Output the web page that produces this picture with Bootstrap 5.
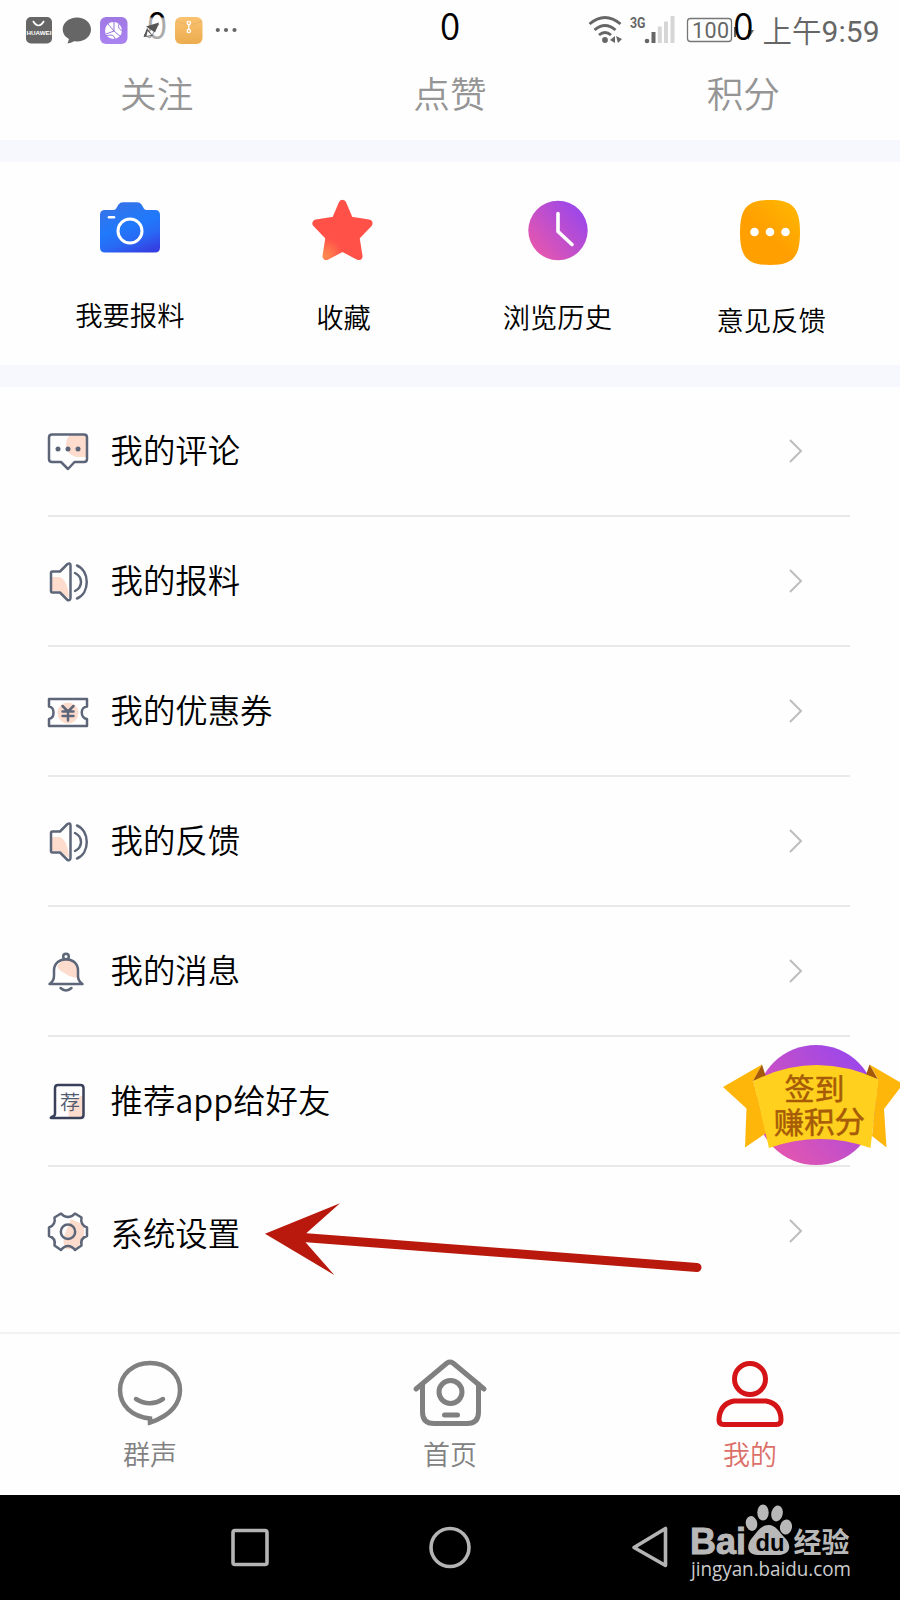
<!DOCTYPE html>
<html lang="zh-CN">
<head>
<meta charset="utf-8">
<meta name="viewport" content="width=device-width, initial-scale=1">
<title>我的</title>
<link rel="stylesheet" href="https://cdn.jsdelivr.net/npm/bootstrap@5.3.0/dist/css/bootstrap.min.css">
<style>
  body { font-family: "Noto Sans CJK SC", sans-serif; font-weight: 350; color: #000; background: #fefefe; }
  svg { display: block; overflow: visible; flex: none; }
  .screen { width: 900px; height: 1600px; }
  .stats { height: 140px; padding: 0 10px; font-size: 36.7px; }
  .stat-num { height: 54px; line-height: 49px; color: #000; }
  .stat-label { line-height: 54px; margin-top: 11px; color: #959595; }
  .statusbar { height: 60px; color: #666; font-weight: 400; }
  .gap-band { height: 22px; background: #f7f8fd; }
  .quick { height: 203px; padding: 28px 22px 0 23px; font-size: 27.3px; line-height: 40px; }
  .quick svg { margin-bottom: 34px; }
  .menu { height: 945px; padding: 0 50px 0 47.5px; font-size: 32.4px; }
  .menu-row { height: 130px; border-bottom: 2px solid #e9e9e9; padding-right: 47px; }
  .menu-row:last-child { border-bottom-color: transparent; }
  .menu-row span { margin-left: 23px; line-height: 48px; padding-bottom: 4px; }
  .menu-row:last-child span { padding-bottom: 0; padding-top: 1px; }
  .line-icon { fill: none; stroke: #5d6678; stroke-width: 2.5; stroke-linejoin: round; stroke-linecap: round; }
  .line-icon .blush { fill: #fddccd; stroke: none; }
  .chevron { fill: none; stroke: #bdbdbd; stroke-width: 2; }
  .tabs { height: 163px; border-top: 2px solid #f2f2f2; font-size: 27px; line-height: 40px; color: #818181; }
  .tabs svg { margin: 20px 0 6px; fill: none; stroke: #808080; stroke-width: 5; stroke-linecap: round; stroke-linejoin: round; }
  .tabs .current { color: #dc7068; }
  .tabs .current svg { stroke: #d51417; }
  .sysbar { height: 105px; background: #000; font-weight: 400; }
  .sys-key { fill: none; stroke: #b4b4b4; stroke-width: 3.6; stroke-linejoin: round; }
  .overlay { pointer-events: none; }
  .checkin { left: 720px; top: 1040px; }
  .pointer { left: 260px; top: 1195px; }
</style>
</head>
<body>
<div class="screen position-relative overflow-hidden d-flex flex-column">

  <div class="statusbar position-absolute top-0 start-0 w-100">
    <svg width="900" height="60" viewBox="0 0 900 60">
      <rect x="26" y="17" width="26" height="26.500" rx="5" fill="#666"/>
      <path d="M33 21q5.500 9 11 0" fill="none" stroke="#fff" stroke-width="1.700"/>
      <text x="26.500" y="35" font-family="Liberation Sans" font-weight="700" font-size="5.600" textLength="25" lengthAdjust="spacingAndGlyphs" fill="#fff">HUAWEI</text>
      <path d="M77 17.500c8 0 14 5.200 14 12s-6 12-14 12l-3-.3q-3 2-6.500 2.300l1.500-4.500q-6.300-3.200-6.300-9.500c0-6.800 6.300-12 14.300-12z" fill="#666"/>
      <defs>
        <linearGradient id="orangeApp" x2="0" y2="1"><stop stop-color="#fac270"/><stop offset="1" stop-color="#edac4f"/></linearGradient>
        <linearGradient id="violetApp" x2="0" y2="1"><stop stop-color="#9f78e4"/><stop offset="1" stop-color="#a983f0"/></linearGradient>
        <linearGradient id="zero" gradientUnits="userSpaceOnUse" x1="0" y1="12" x2="0" y2="40"><stop offset=".16" stop-color="#000"/><stop offset=".24" stop-color="#aaa"/></linearGradient>
      </defs>
      <rect x="100" y="17" width="27.500" height="27" rx="6" fill="url(#violetApp)"/>
      <circle cx="113.500" cy="30.500" r="8.500" fill="#fff"/>
      <path d="M114 22v9l-8 3m8-3 7 6m-7-6-6-7m-2 12q8-3 9 3m4-15q-2 5 4 7" fill="none" stroke="#9874dc" stroke-width="1"/>
      <rect x="175" y="17" width="27.500" height="27" rx="6" fill="url(#orangeApp)"/>
      <path d="M176 21q13 7 26 0" fill="none" stroke="#e9b267" stroke-width="1"/>
      <g fill="none" stroke="#fff" stroke-width="1.300"><circle cx="188.800" cy="23" r="1.700"/><path d="M188.800 25v4"/><circle cx="188.800" cy="31" r="1.700"/></g>
      <g fill="#666"><circle cx="217.800" cy="30" r="2.100"/><circle cx="226" cy="30" r="2.100"/><circle cx="234.500" cy="30" r="2.100"/></g>
      <g fill="none" stroke="#666" stroke-width="2.900">
        <path d="M589.500 24q15.500-13 31 0M594.500 30q10.500-9 21 0M599 35q6-5 12 0"/>
      </g>
      <circle cx="605" cy="40" r="2.900" fill="#666"/>
      <path d="M610 40l5-4v7zM616 36l6 3-4 4z" fill="#666"/>
      <text x="630" y="27.500" font-family="Roboto" font-weight="700" font-size="15.500" textLength="15.500" lengthAdjust="spacingAndGlyphs" fill="#666">3G</text>
      <circle cx="647" cy="41" r="2.300" fill="#666"/>
      <path d="M653.500 43V32" stroke="#666" stroke-width="4"/>
      <path d="M659.800 43V26.500M666 43V21.500M672.500 43V16" stroke="#d6d6d6" stroke-width="4"/>
      <rect x="687.500" y="18.500" width="44" height="23" rx="3" fill="none" stroke="#777" stroke-width="1.300"/>
      <text x="692" y="38" font-family="Roboto" font-size="21.500" textLength="37" fill="#666">100</text>
      <path d="M734 27h2v10h-2zM748 30l6 0-6 10z" fill="#666"/>
      <text x="762.500" y="41.500" font-family="Noto Sans CJK SC" font-weight="350" font-size="29.500" fill="#666">上午</text>
      <text x="821.500" y="41.500" font-family="Roboto" font-size="30" textLength="58" fill="#666">9:59</text>
    </svg>
  </div>

  <header class="stats d-flex text-center flex-shrink-0">
    <div class="w-100 position-relative">
      <svg class="stat-num mx-auto" width="60" height="54" viewBox="127 0 60 54">
        <text x="157" y="39.300" text-anchor="middle" font-size="36.700" fill="url(#zero)">0</text>
        <path d="M159 24l-15 11 6 3z" fill="#fff" stroke="#999" stroke-width="1"/>
        <path d="M159 22.500l-13 4 9 6zM143.500 37l3.500-9 6 8z" fill="#555"/>
        <path d="M147.500 31l4 4-5 1z" fill="#fff"/>
      </svg>
      <div class="stat-label">关注</div>
    </div>
    <div class="w-100 position-relative"><div class="stat-num">0</div><div class="stat-label">点赞</div></div>
    <div class="w-100 position-relative"><div class="stat-num">0</div><div class="stat-label">积分</div></div>
  </header>

  <div class="gap-band flex-shrink-0"></div>

  <section class="quick d-flex flex-shrink-0">
    <div class="w-100 d-flex flex-column align-items-center">
      <svg width="60" height="70" viewBox="0 0 60 70">
        <defs><linearGradient id="cam" x1=".3" y1="0" x2=".75" y2="1"><stop stop-color="#3673e8"/><stop offset=".45" stop-color="#2079fb"/><stop offset=".7" stop-color="#286af5"/><stop offset="1" stop-color="#3440e2"/></linearGradient></defs>
        <path d="M5 20H14Q16 20 17 17L18.500 14.500Q20 12.300 23 12.300H37Q40 12.300 41.500 14.500L43 17Q44 20 46 20H55Q60 20 60 25V57.500Q60 62.500 55 62.500H5Q0 62.500 0 57.500V25Q0 20 5 20Z" fill="url(#cam)"/>
        <circle cx="30" cy="41" r="12" fill="none" stroke="#fff" stroke-width="3"/>
        <path d="M9 27.300h5" stroke="#fff" stroke-width="2.600" stroke-linecap="round"/>
      </svg>
      <div>我要报料</div>
    </div>
    <div class="w-100 d-flex flex-column align-items-center">
      <svg width="60" height="72" viewBox="1.500 -.5 60 72">
        <defs><radialGradient id="star" cx=".16" cy="1" r=".35"><stop stop-color="#ff8b50"/><stop offset="1" stop-color="#ff5148"/></radialGradient></defs>
        <path d="M30 13.500 37 30 56 33 43 46.500 46 65.500 30 57 14 65.500 17 46.500 4 33 23 30Z" fill="url(#star)" stroke="url(#star)" stroke-width="8" stroke-linejoin="round"/>
      </svg>
      <div>收藏</div>
    </div>
    <div class="w-100 d-flex flex-column align-items-center">
      <svg width="60" height="72" viewBox="0 0 60 72">
        <defs><linearGradient id="violet" x1=".1" y1=".9" x2=".9" y2=".2"><stop stop-color="#e757ac"/><stop offset="1" stop-color="#9d47e9"/></linearGradient></defs>
        <circle cx="31" cy="40.500" r="29.700" fill="url(#violet)"/>
        <path d="M31 23.500V41.500L45 54.500" fill="none" stroke="#fff" stroke-width="3.600" stroke-linecap="round" stroke-linejoin="round"/>
      </svg>
      <div>浏览历史</div>
    </div>
    <div class="w-100 d-flex flex-column align-items-center">
      <svg width="60" height="75" viewBox="1 0 60 75">
        <defs><linearGradient id="amber" x1=".5" y1=".6" x2="1" y2="0"><stop stop-color="#ff9f00"/><stop offset="1" stop-color="#ffb900"/></linearGradient></defs>
        <path d="M30 10C52 10 60 17 60 42.500S52 75 30 75 0 68 0 42.500 8 10 30 10Z" fill="url(#amber)"/>
        <g fill="#fff"><circle cx="14.500" cy="42" r="4.300"/><circle cx="30" cy="42" r="4.300"/><circle cx="45.500" cy="42" r="4.300"/></g>
      </svg>
      <div>意见反馈</div>
    </div>
  </section>

  <div class="gap-band flex-shrink-0"></div>

  <main class="menu flex-shrink-0">
    <div class="menu-row d-flex align-items-center">
      <svg class="line-icon" width="40" height="40">
        <path class="blush" d="M22 4h16v22h-10q-10-3-10-12 0-6 4-10z"/>
        <path d="M4 3.500H36Q39 3.500 39 6.500V28Q39 31 36 31H26.500L20 38 13 31H4Q1 31 1 28V6.500Q1 3.500 4 3.500Z"/>
        <g fill="#5d6678" stroke="none"><circle cx="10" cy="18" r="2.500"/><circle cx="20" cy="18" r="2.500"/><circle cx="30" cy="18" r="2.500"/></g>
      </svg>
      <span>我的评论</span>
      <svg class="chevron ms-auto" width="14" height="24"><path d="M1 1 12 12 1 23"/></svg>
    </div>
    <div class="menu-row d-flex align-items-center">
      <svg class="line-icon" width="40" height="40">
        <path class="blush" d="M4 16h8q8 4 9 21l-10-7H4z"/>
        <path d="M4.500 10.500H12L19.500 3Q22.500 1.500 22.500 4.500V36.500Q22.500 40 19.500 39L12 31.500H4.500Q3 31.500 3 30V12Q3 10.500 4.500 10.500ZM29 4.500C42 10 42 32 29 37.500M27 12C35 16 35 26 27 30"/>
      </svg>
      <span>我的报料</span>
      <svg class="chevron ms-auto" width="14" height="24"><path d="M1 1 12 12 1 23"/></svg>
    </div>
    <div class="menu-row d-flex align-items-center">
      <svg class="line-icon" width="40" height="40">
        <circle class="blush" cx="20" cy="22" r="10.500"/>
        <path d="M1 8H39V15.500C32 16 32 27 39 28V35H1V28C7 27 7 16 1 15.500ZM14.500 15 20 20.500 25.500 15M20 20.500V29.500M14.500 20.500H25.500M14.500 25H25.500"/>
      </svg>
      <span>我的优惠券</span>
      <svg class="chevron ms-auto" width="14" height="24"><path d="M1 1 12 12 1 23"/></svg>
    </div>
    <div class="menu-row d-flex align-items-center">
      <svg class="line-icon" width="40" height="40">
        <path class="blush" d="M4 16h8q8 4 9 21l-10-7H4z"/>
        <path d="M4.500 10.500H12L19.500 3Q22.500 1.500 22.500 4.500V36.500Q22.500 40 19.500 39L12 31.500H4.500Q3 31.500 3 30V12Q3 10.500 4.500 10.500ZM29 4.500C42 10 42 32 29 37.500M27 12C35 16 35 26 27 30"/>
      </svg>
      <span>我的反馈</span>
      <svg class="chevron ms-auto" width="14" height="24"><path d="M1 1 12 12 1 23"/></svg>
    </div>
    <div class="menu-row d-flex align-items-center">
      <svg class="line-icon" width="40" height="40">
        <path class="blush" d="M9 15q8-10 17-5 5 3 4 17-8-1-12-4-8-4-9-8z"/>
        <circle cx="18" cy="5.500" r="2.800"/>
        <path d="M1.500 33Q6 30 6 25V19.500C6 4.500 30 4.500 30 19.500V25Q30 30 34.500 33ZM12.500 37Q18 42 23.500 37"/>
      </svg>
      <span>我的消息</span>
      <svg class="chevron ms-auto" width="14" height="24"><path d="M1 1 12 12 1 23"/></svg>
    </div>
    <div class="menu-row d-flex align-items-center">
      <svg class="line-icon" width="40" height="40">
        <path class="blush" d="M35 14v22H21q-2-9 2-14 4-5 12-8z"/>
        <path stroke="#39405a" d="M7 33V7Q7 4 10 4H32.500Q35.500 4 35.500 7V34Q35.500 37 32.500 37H3.500Q2 37 3.500 36 7 35 7 33Z"/>
        <text x="12" y="28.500" font-family="Noto Sans CJK SC" font-size="20" fill="#515a70" stroke="none">荐</text>
      </svg>
      <span>推荐app给好友</span>
    </div>
    <div class="menu-row d-flex align-items-center">
      <svg class="line-icon" width="40" height="40">
        <path class="blush" d="M23 8l13 6v14l-8 10h-10q-5-8 0-18z"/>
        <path d="M13 2.500Q16 6 20 6T27 2.500L33.500 6.500Q32 14 39 16.500V25Q32 27 33.500 34.500L27 39Q24 35 20 35T13 39L6.500 34.500Q8 27 1 25V16.500Q8 14 6.500 6.500Z"/>
        <circle cx="20" cy="20.700" r="7.200"/>
      </svg>
      <span>系统设置</span>
      <svg class="chevron ms-auto" width="14" height="24"><path d="M1 1 12 12 1 23"/></svg>
    </div>
  </main>

  <nav class="tabs d-flex flex-shrink-0">
    <div class="w-100 d-flex flex-column align-items-center">
      <svg width="72" height="74" viewBox="0 .5 72 74">
        <path d="M36 65C18 63 6 52 6 36.500 6 21 19 9.500 36 9.500S66 21 66 36.500C66 49 58 62 36 69Z" stroke-width="4.500" stroke-linejoin="miter"/>
        <path d="M22 45.500Q36 54 49 45.500" stroke-width="4.500"/>
      </svg>
      <div>群声</div>
    </div>
    <div class="w-100 d-flex flex-column align-items-center">
      <svg width="72" height="74" viewBox="0 0 72 74">
        <path d="M2 35 33 9Q36 7 39 9L70 35M8.500 30V58Q8.500 69.500 20 69.500H53Q64.500 69.500 64.500 58V30"/>
        <circle cx="36.500" cy="38" r="11.500"/><path d="M30.500 61H43.500"/>
      </svg>
      <div>首页</div>
    </div>
    <div class="current w-100 d-flex flex-column align-items-center">
      <svg width="72" height="74" viewBox="0 0 72 74">
        <circle cx="36" cy="25" r="15.500"/>
        <path d="M20 47H52Q67 50 67 66Q67 70.500 62.500 70.500H9.500Q5 70.500 5 66Q5.500 50 20 47Z"/>
      </svg>
      <div>我的</div>
    </div>
  </nav>

  <footer class="sysbar flex-shrink-0">
    <svg width="900" height="105" viewBox="0 1495 900 105">
      <g class="sys-key">
        <rect x="233" y="1530.500" width="34" height="34" rx="2"/>
        <circle cx="450" cy="1547.500" r="19"/>
        <path d="M665.500 1528.500V1565.500L634 1547.500Z"/>
      </g>
      <g fill="#b8b8b8">
        <text x="690" y="1554" font-family="Liberation Sans" font-weight="700" font-size="37" stroke="#b8b8b8" textLength="56" lengthAdjust="spacingAndGlyphs">Bai</text>
        <ellipse cx="751.500" cy="1523.500" rx="5.700" ry="7.500" transform="rotate(-12 751.500 1523.500)"/>
        <ellipse cx="763" cy="1512.500" rx="5.700" ry="8"/>
        <ellipse cx="777" cy="1513.500" rx="5.700" ry="8" transform="rotate(14 777 1513.500)"/>
        <ellipse cx="786" cy="1527" rx="6" ry="7.500" transform="rotate(10 786 1527)"/>
        <path d="M768.500 1525C776 1525 779 1532 785 1538S792 1554 779 1555H758C745 1554 747 1544 752 1538S761 1525 768.500 1525Z"/>
        <text x="793.500" y="1552.500" font-family="Noto Sans CJK SC" font-weight="700" font-size="28" textLength="56">经验</text>
      </g>
      <text x="755.500" y="1551" font-family="Liberation Sans" font-weight="700" font-size="24" textLength="29" lengthAdjust="spacingAndGlyphs" fill="#000">du</text>
      <text x="691" y="1575.500" font-family="Open Sans" font-size="19.500" textLength="160" lengthAdjust="spacingAndGlyphs" fill="#ccc">jingyan.baidu.com</text>
    </svg>
  </footer>

  <svg class="overlay checkin position-absolute" width="180" height="130" viewBox="720 1040 180 130">
    <circle cx="816" cy="1105" r="60" fill="url(#violet)"/>
    <path d="M762 1064.500 723 1087 746.500 1108.500 745 1147.500 766 1133 753.300 1080.700ZM869.500 1064.500 903 1084 884 1109 886.500 1147.500 872 1136 878 1079Z" fill="#ffb60a"/>
    <path d="M762 1064.500 753 1081 766 1077ZM869.500 1064.500 866 1075 878 1079.500Z" fill="#a4590a"/>
    <path d="M753.300 1081Q815 1050 878.500 1079.500L870.500 1148Q820 1130 769 1148Z" fill="#ffd01d"/>
    <g font-family="Noto Sans CJK SC" font-weight="400" fill="#a65b08" stroke="#a65b08" stroke-width=".5">
      <text x="784.500" y="1099.500" font-size="30">签到</text>
      <text x="773.500" y="1133.500" font-size="30.500" transform="rotate(-1 819 1123)">赚积分</text>
    </g>
  </svg>
  <svg class="overlay pointer position-absolute" width="450" height="90" viewBox="260 1195 450 90">
    <path d="M303 1237.500 697 1267.500" stroke="#b9180c" stroke-width="9" stroke-linecap="round"/>
    <path d="M265 1233.700 340 1203.300 306.500 1233 305.300 1242 334.300 1275Z" fill="#b9180c"/>
  </svg>
</div>
<script src="https://cdn.jsdelivr.net/npm/bootstrap@5.3.0/dist/js/bootstrap.bundle.min.js"></script>
</body>
</html>
